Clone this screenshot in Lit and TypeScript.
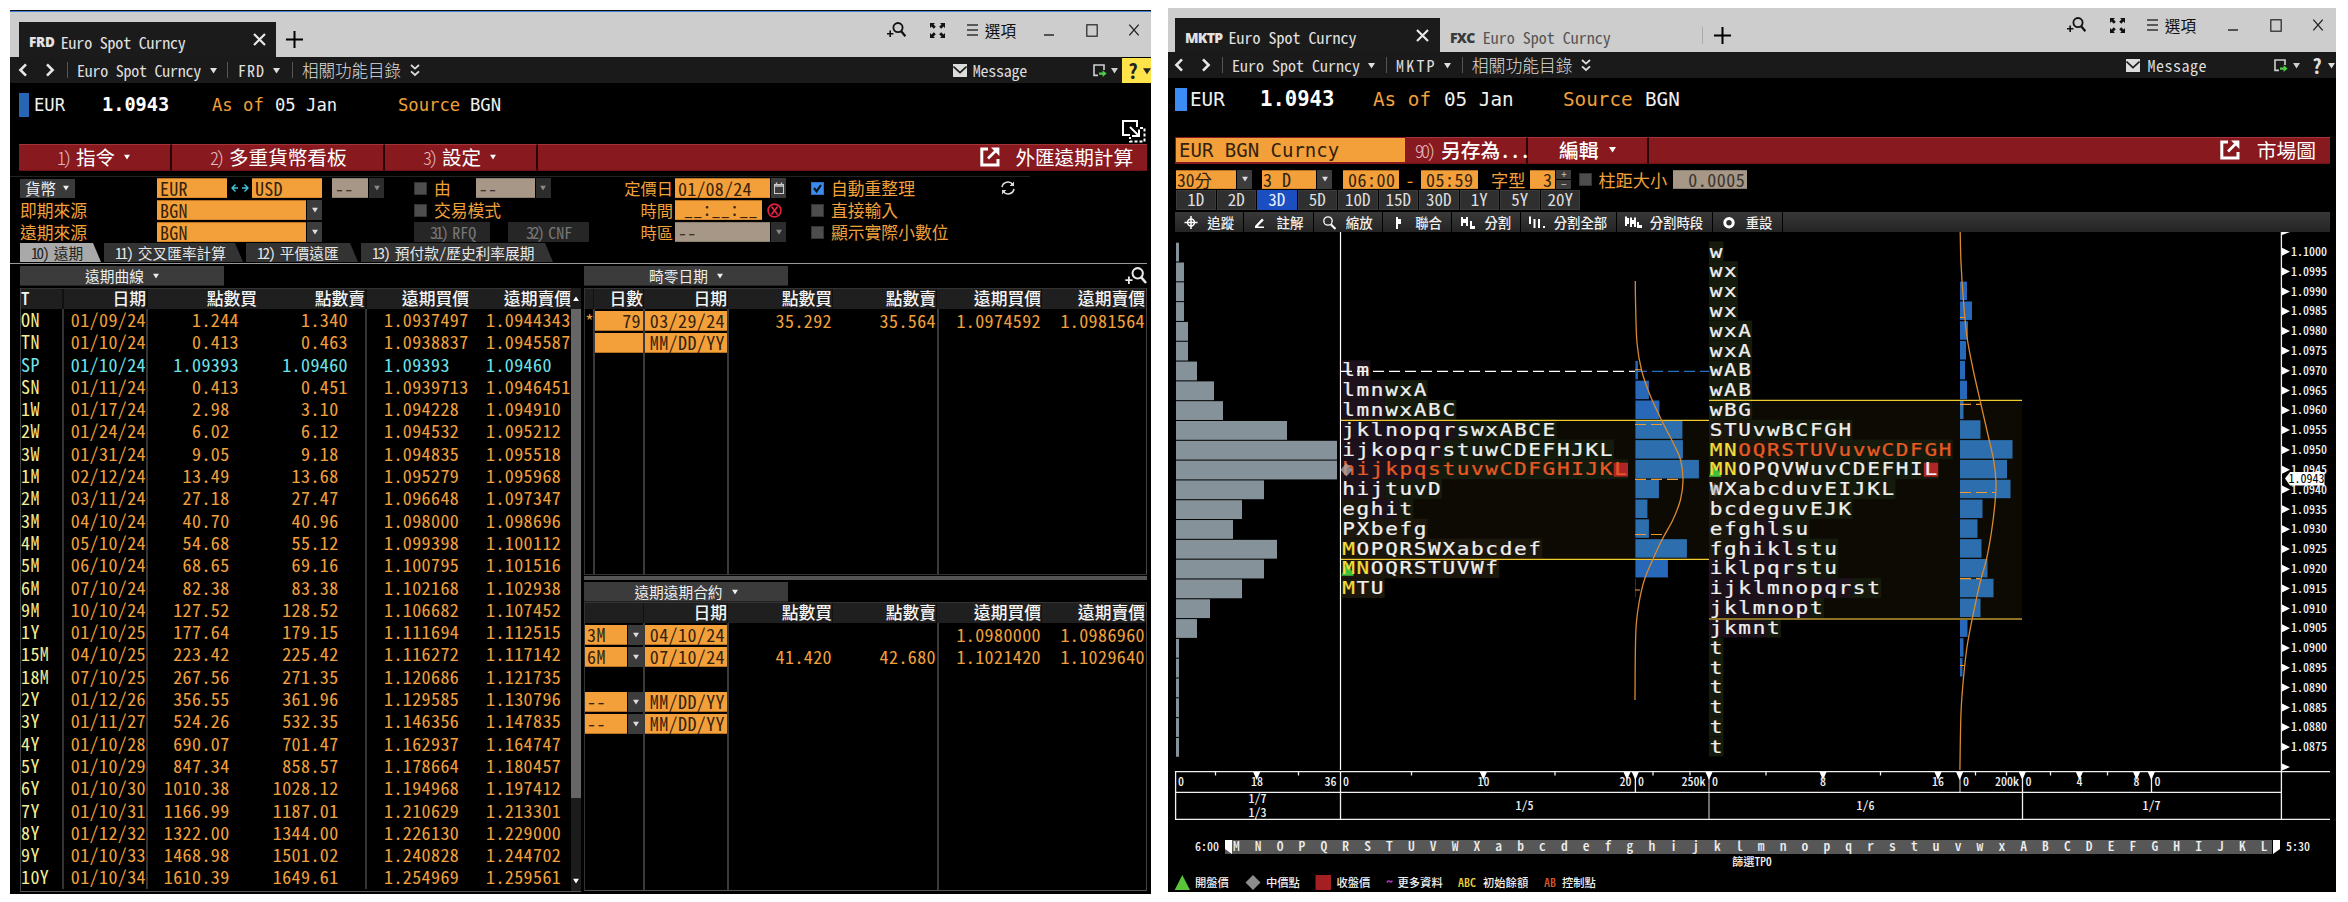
import { LitElement, html, svg, css } from "lit";
import { customElement } from "lit/decorators.js";

/* ---------- shared look ---------- */

const shared = css`
  :host {
    display: flex;
    flex-direction: column;
    box-sizing: border-box;
    background: #000;
    overflow: hidden;
    font-family: "Noto Sans CJK TC", "Liberation Sans", sans-serif;
    font-feature-settings: "hwid";
    color: #e6e6e6;
    white-space: nowrap;
  }
  * { box-sizing: border-box; }
  svg { display: block; flex: none; }
  .titlebar {
    display: flex;
    align-items: flex-end;
    background: #cdcdcd;
    flex: none;
  }
  .tab { display: flex; align-items: center; font-size: 16px; letter-spacing: -0.2px; }
  .tab.active { background: #1b1b1b; color: #e2e2e2; }
  .tab b { font-family: "Open Sans", sans-serif; font-weight: 800; font-size: 13.5px; letter-spacing: -0.2px; }
  .sysicons { display: flex; align-items: center; margin-left: auto; align-self: flex-start; color: #111; }
  .sysicons .opt { font-size: 15.6px; line-height: 20px; }
  .nav {
    display: flex; align-items: center; flex: none;
    height: 26px; background: #1a1a1a; color: #dedede; font-size: 16px; letter-spacing: -0.25px;
  }
  .nav .txt { line-height: 24px; }
  .nav .rel { font-size: 16.5px; font-weight: 300; letter-spacing: 0; line-height: 24px; }
  .nav .sep { width: 1px; height: 16px; background: #555; }
  .nav .end { display: flex; align-items: center; height: 26px; margin-left: auto; }
  .info { display: grid; flex: none; font-family: "DejaVu Sans Mono", monospace; color: #f0f0f0; }
  .info .o { color: #f0a03a; }
  .info b { color: #fff; }
  .red { display: flex; flex: none; color: #fff; }
  .red .cell {
    display: flex; align-items: center; background: #87191f;
    border-top: 1px solid #a2343a; border-bottom: 1px solid #6d1217; border-right: 2px solid #2a0507;
  }
  .red .n { font-size: 18px; letter-spacing: -3px; padding-right: 2px; color: #e0b9bb; font-weight: 300; }
  .fld { background: #f3a03b; color: #33220c; border-top: 1px solid #b87424; border-bottom: 1px solid #d98b2e; display: flex; align-items: center; }
  .fld.off { background: #a69787; color: #3a332c; border-color: #8a7e70; }
  .dd { background: #3c3c3c; display: flex; align-items: center; justify-content: center; color: #ddd; }
  .dd.off { background: #2c2c2c; color: #888; }
  .cb { width: 13px; height: 13px; background: #4d4d4d; border: 1px solid #333; flex: none; }
`;

const caret = (s = 7) => html`<svg width=${s} height=${s} viewBox="0 0 7 7"><path d="M0 1H7L3.5 6.4Z" fill="currentColor" /></svg>`;

const iconSearchPlus = (w = 19, h = 16) => html`<svg width=${w} height=${h} viewBox="0 0 19 16" fill="none" stroke="currentColor">
  <circle cx="11" cy="5.6" r="4.6" stroke-width="1.8" /><path d="M14.2 9.2L18.4 14.2" stroke-width="2.2" /><path d="M0 11.7H6.4M3.2 8.5V15" stroke-width="1.6" />
</svg>`;
const iconExpand = html`<svg width="15" height="15" viewBox="0 0 15 15" fill="currentColor">
  <path d="M0 0H5L3.5 1.5 5.8 3.8 3.8 5.8 1.5 3.5 0 5ZM15 0V5L13.5 3.5 11.2 5.8 9.2 3.8 11.5 1.5 10 0ZM0 15V10L1.5 11.5 3.8 9.2 5.8 11.2 3.5 13.5 5 15ZM15 15H10L11.5 13.5 9.2 11.2 11.2 9.2 13.5 11.5 15 10Z" />
</svg>`;
const iconMenu = html`<svg width="11" height="12" viewBox="0 0 11 12" stroke="#333" stroke-width="1.3"><path d="M0 1H11M0 6H11M0 11H11" /></svg>`;
const iconMin = html`<svg width="10" height="14" viewBox="0 0 10 14" stroke="#111" stroke-width="1.3"><path d="M0 12H10" /></svg>`;
const iconMax = html`<svg width="12" height="13" viewBox="0 0 12 13" fill="none" stroke="#222" stroke-width="1.2"><rect x="0.8" y="0.8" width="10.4" height="11.4" /></svg>`;
const iconClose = html`<svg width="10" height="12" viewBox="0 0 10 12" stroke="#222" stroke-width="1.3"><path d="M0.3 0.6L9.7 11.4M9.7 0.6L0.3 11.4" /></svg>`;
const iconTabX = html`<svg width="13" height="13" viewBox="0 0 13 13" stroke="#e8e8e8" stroke-width="2.2"><path d="M1 1L12 12M12 1L1 12" /></svg>`;
const iconPlus = html`<svg width="17" height="17" viewBox="0 0 17 17" stroke="#000" stroke-width="2"><path d="M0 8.5H17M8.5 0V17" /></svg>`;
const iconBack = html`<svg width="10" height="14" viewBox="0 0 10 14" fill="none" stroke="#e6e6e6" stroke-width="2.6"><path d="M8 1.4L2.4 7 8 12.6" /></svg>`;
const iconFwd = html`<svg width="10" height="14" viewBox="0 0 10 14" fill="none" stroke="#e6e6e6" stroke-width="2.6"><path d="M2 1.4L7.6 7 2 12.6" /></svg>`;
const iconDouble = html`<svg width="10" height="13" viewBox="0 0 10 13" fill="none" stroke="#ddd" stroke-width="1.8"><path d="M1 1L5 4.6 9 1M1 7.4L5 11 9 7.4" /></svg>`;
const iconMail = html`<svg width="14" height="13" viewBox="0 0 14 13"><rect width="14" height="13" fill="#dcdcdc" /><path d="M0.5 2.5L7 8.6 13.5 2.5" fill="none" stroke="#1a1a1a" stroke-width="1.6" /></svg>`;
const iconDoc = html`<svg width="14" height="13" viewBox="0 0 14 13" fill="none"><path d="M5 11.4H1V1H11V6" stroke="#cfcfcf" stroke-width="1.6" /><path d="M6 8.6H9.6V6.2L13.6 9.6 9.6 13V10.8H6Z" fill="#4fd046" /></svg>`;
const iconPopout = html`<svg width="20" height="20" viewBox="0 0 20 20" fill="none" stroke="#fff">
  <path d="M8 2H1.8V18H18V12" stroke-width="3" /><path d="M8 11.5L15.5 4" stroke-width="2.6" /><path d="M11 0.5H19.4V9Z" fill="#fff" stroke="none" />
</svg>`;

const sysIcons = html`<div class="sysicons">
  ${iconSearchPlus()}<span class="g24">${iconExpand}</span><span class="g22">${iconMenu}</span><span class="opt g7">選項</span>
  <span class="g30">${iconMin}</span><span class="g32">${iconMax}</span><span class="g31">${iconClose}</span>
</div>`;

const sysCss = css`
  .sysicons { font-size: 0; }
  .g24 { margin-left: 24px; } .g22 { margin-left: 22px; } .g7 { margin-left: 7px; }
  .g30 { margin-left: 28px; } .g32 { margin-left: 32px; } .g31 { margin-left: 31px; }
`;

/* ---------- forward rates window ---------- */

const CURVE: string[][] = [
  ["ON", "01/09/24", "1.244", "1.340", "1.0937497", "1.0944343"],
  ["TN", "01/10/24", "0.413", "0.463", "1.0938837", "1.0945587"],
  ["SP", "01/10/24", "1.09393", "1.09460", "1.09393", "1.09460"],
  ["SN", "01/11/24", "0.413", "0.451", "1.0939713", "1.0946451"],
  ["1W", "01/17/24", "2.98", "3.10", "1.094228", "1.094910"],
  ["2W", "01/24/24", "6.02", "6.12", "1.094532", "1.095212"],
  ["3W", "01/31/24", "9.05", "9.18", "1.094835", "1.095518"],
  ["1M", "02/12/24", "13.49", "13.68", "1.095279", "1.095968"],
  ["2M", "03/11/24", "27.18", "27.47", "1.096648", "1.097347"],
  ["3M", "04/10/24", "40.70", "40.96", "1.098000", "1.098696"],
  ["4M", "05/10/24", "54.68", "55.12", "1.099398", "1.100112"],
  ["5M", "06/10/24", "68.65", "69.16", "1.100795", "1.101516"],
  ["6M", "07/10/24", "82.38", "83.38", "1.102168", "1.102938"],
  ["9M", "10/10/24", "127.52", "128.52", "1.106682", "1.107452"],
  ["1Y", "01/10/25", "177.64", "179.15", "1.111694", "1.112515"],
  ["15M", "04/10/25", "223.42", "225.42", "1.116272", "1.117142"],
  ["18M", "07/10/25", "267.56", "271.35", "1.120686", "1.121735"],
  ["2Y", "01/12/26", "356.55", "361.96", "1.129585", "1.130796"],
  ["3Y", "01/11/27", "524.26", "532.35", "1.146356", "1.147835"],
  ["4Y", "01/10/28", "690.07", "701.47", "1.162937", "1.164747"],
  ["5Y", "01/10/29", "847.34", "858.57", "1.178664", "1.180457"],
  ["6Y", "01/10/30", "1010.38", "1028.12", "1.194968", "1.197412"],
  ["7Y", "01/10/31", "1166.99", "1187.01", "1.210629", "1.213301"],
  ["8Y", "01/12/32", "1322.00", "1344.00", "1.226130", "1.229000"],
  ["9Y", "01/10/33", "1468.98", "1501.02", "1.240828", "1.244702"],
  ["10Y", "01/10/34", "1610.39", "1649.61", "1.254969", "1.259561"],
];

/* Two-decimal quotes keep one blank so that the decimal points line up. */
const padPts = (v: string) => (v.split(".")[1].length === 2 ? v + "\u00a0" : v);

@customElement("frd-window")
export class FrdWindow extends LitElement {
  static styles = [shared, sysCss, css`
    :host { width: 1141px; height: 884px; margin-top: 10px; }
    .titlebar { height: 47px; border-top: 1px solid #111; box-shadow: inset 0 1px 0 #3d7fd6; padding-left: 9px; }
    .tab.active { width: 257px; height: 35px; padding: 5px 10px 0 10px; }
    .tab .t { margin-left: 6px; line-height: 22px; }
    .tab .x { margin-left: auto; margin-top: -5px; }
    .plus { margin: 0 0 9px 10px; }
    .sysicons { margin-top: 9px; padding-right: 12px; }
    .nav { padding-left: 8px; }
    .a1 { margin-left: 17px; } .a2 { margin-left: 12px; } .a3 { margin-left: 9px; }
    .a4 { margin-left: 9px; } .a5 { margin-left: 10px; } .a6 { margin-left: 10px; } .a7 { margin-left: 8px; }
    .nav .a6 { letter-spacing: 1px; }
    .msg { margin: 0 66px 0 6px; }
    .doc { display: flex; align-items: center; gap: 4px; margin-right: 4px; color: #ccc; }
    .help { width: 29px; height: 26px; border-top: 1px solid #000; background: #ffe34b; color: #222; display: flex; align-items: center; padding-left: 6px; gap: 5px; font-weight: 700; font-size: 20px; }
    .info {
      height: 61px; padding: 10px 0 0 9px; font-size: 17.2px; line-height: 24px;
      grid-template-columns: 15px 68px 110px 63px 123px 72px 1fr 29px;
    }
    .info b { font-size: 18.6px; }
    .bar { width: 10px; height: 24px; background: #2765b5; }
    .move { align-self: end; padding-bottom: 1px; }
    .red { height: 27px; padding: 0 4px 0 9px; }
    .red .cell { padding-left: 38px; font-size: 19.6px; gap: 7px; padding-bottom: 2px; }
    .red .c1 { width: 153px; gap: 5px; } .red .c2 { width: 213px; gap: 5px; } .red .c3 { width: 153px; gap: 5px; }
    .red .c1 .caret, .red .c3 .caret { margin-left: 4px; }
    .red .c4 { flex: 1; padding: 0 14px 2px 0; justify-content: flex-end; gap: 15px; border-right: 0; }
    .form {
      display: grid; flex: none; height: 72px; padding: 7px 0 0 10px;
      background: linear-gradient(#222, #222) 0 5px / 1020px 1px no-repeat;
      grid-template-columns: 137px 175px 82px 194px 67px 136px 190px 1fr;
      grid-auto-rows: 20px; row-gap: 2px; font-size: 16.8px; line-height: 20px; color: #f2a03c;
    }
    .form > div { display: flex; align-items: center; height: 20px; }
    .form .fld, .form .dd { height: 20px; }
    .fld { font-size: 18px; letter-spacing: 0.2px; padding-left: 3px; line-height: 18px; }
    .ccy { background: #3a3a3a; color: #f0f0f0; width: 55px; height: 19px; display: flex; align-items: center; padding-left: 5px; gap: 7px; font-size: 15.5px; }
    .w70 { width: 70px; } .w36 { width: 36px; } .w59 { width: 59px; } .w149 { width: 149px; } .w95 { width: 95px; } .w87 { width: 87px; }
    .w15 { width: 15px; margin-left: 1px; }
    .form .mask { padding: 0 0 5px 9px; }
    .swap { width: 25px; display: flex; justify-content: center; }
    .gap7 { gap: 7px; }
    .from { display: flex; margin-left: 18px; }
    .btn { background: #262626; color: #777; height: 20px; display: flex; align-items: center; font-size: 16px; gap: 6px; padding-left: 16px; margin-right: 18px; }
    .btn .n { letter-spacing: -2.6px; }
    .b1 { width: 76px; } .b2 { width: 81px; padding-left: 18px; margin: 0; }
    .rj { justify-content: flex-end; padding-right: 2px; font-size: 16.3px; }
    .cb.on { background: #3b8cf0; border-color: #2f6fc0; }
    .tabs { display: flex; flex: none; height: 21px; padding-left: 10px; align-items: flex-start; border-bottom: 1px solid #9a9a9a; margin-right: 4px; }
    .tabs div { height: 19px; background: #333; display: flex; align-items: center; padding-left: 11px; gap: 6px; font-size: 14.7px; margin-right: 3px; clip-path: polygon(0 0, calc(100% - 8px) 0, 100% 100%, 0 100%); }
    .tabs .n { font-size: 15px; letter-spacing: -1.9px; }
    .tabs .on { background: #a9a9a9; color: #222; width: 81px; }
    .t2 { width: 139px; } .t3 { width: 112px; } .t4 { width: 192px; }
    .body { display: grid; grid-template-columns: 561px 1fr; column-gap: 3px; padding: 2px 4px 0 10px; height: 630px; }
    .phead { height: 20px; width: 204px; background: #3b3b3b; border-bottom: 1px solid #222; color: #eee; display: flex; align-items: center; justify-content: center; gap: 9px; font-size: 14.7px; }
    .curve, .side { display: flex; flex-direction: column; }
    .frame { display: flex; margin-top: 2px; height: 604px; border-bottom: 1px solid #555; }
    .rows { width: 551px; border-left: 1px solid #444; display: flex; flex-direction: column; }
    .row { display: grid; flex: none; height: 22.31px; line-height: 20.5px; font-size: 18px; letter-spacing: 0.4px; color: #f2a03c; }
    .rows .row { grid-template-columns: 43px 84px 109px 110px 102px 102px; }
    .rows .row span { height: 22.31px; }
    .row.h { height: 21px; line-height: 19px; font-size: 16.8px; letter-spacing: 0; color: #f4f4f4; background: #1f1f1f; border-top: 1px solid #333; font-weight: 500; }
    .rows .row.h span { height: 20px; }
    .row span { text-align: right; }
    .row span:first-child { text-align: left; }
    .rows .tn { color: #f3ee93; }
    .rows .v { border-right: 2px solid #333; }
    .rows .p1 { padding-right: 18px; } .rows .p2 { padding-right: 17px; }
    .rows .row .o1 { text-align: left; padding-left: 17px; }
    .rows .row .o2 { text-align: left; padding-left: 17px; }
    .row.h .v { border-right: 2px solid #111; }
    .rows .h .tn { color: #f4f4f4; }
    .sp, .rows .sp .tn { color: #6fe3ea; }
    .scroll { width: 10px; display: flex; flex-direction: column; align-items: center; background: #1c1c1c; color: #fff; }
    .scroll .up { height: 21px; display: flex; align-items: center; flex: none; }
    .scroll .thumb { width: 10px; height: 489px; background: #666; flex: none; }
    .scroll .down { margin-top: 80px; }
    .ph { display: flex; justify-content: space-between; height: 20px; flex: none; }
    .mag { color: #e8e8e8; padding: 1px 0 0; }
    .grid { border-left: 1px solid #333; border-right: 1px solid #444; display: grid; grid-template-rows: 22px; grid-auto-rows: 22.3px; align-content: start; flex: none; }
    .g1 { height: 287px; margin-top: 2px; border-bottom: 1px solid #333; }
    .divider { height: 4px; background: #555; margin: 1px 0 2px; flex: none; }
    .g2 { height: 289px; border-bottom: 1px solid #555; }
    .g1 .row { grid-template-columns: 9px 50px 84px 105px 104px 105px 104px; }
    .g2 .row { grid-template-columns: 59px 84px 105px 104px 105px 104px; }
    .g2 { background: linear-gradient(#3a3a3a, #3a3a3a) 58px 0 / 2px 100% no-repeat, linear-gradient(#3a3a3a, #3a3a3a) 142px 0 / 2px 100% no-repeat, linear-gradient(#3a3a3a, #3a3a3a) 352px 0 / 2px 100% no-repeat; }
    .g1 { background: linear-gradient(#3a3a3a, #3a3a3a) 8px 0 / 2px 100% no-repeat, linear-gradient(#3a3a3a, #3a3a3a) 58px 0 / 2px 100% no-repeat, linear-gradient(#3a3a3a, #3a3a3a) 142px 0 / 2px 100% no-repeat, linear-gradient(#3a3a3a, #3a3a3a) 352px 0 / 2px 100% no-repeat; }
    .g1 .row span, .g2 .row span { padding-right: 1px; }
    .g1 .row.h span, .g2 .row.h span { padding-right: 0; border-right: 1px solid #111; }
    .row i { font-style: normal; background: #f3a03b; color: #33220c; height: 20px; line-height: 18px; margin: 1px 1px 0 1px; padding-right: 2px; text-align: right; border-bottom: 1px solid #b87424; }
    .row .pick { display: flex; margin-top: 1px; height: 20px; padding: 0; }
    .row .pick i { flex: 1; margin: 0; text-align: left; padding-left: 2px; }
    .row .pick .dd { width: 15px; margin: 0 1px; }
  `];

  private gridHead(first: string[]) {
    return html`<div class="row h">${[...first, "日期", "點數買", "點數賣", "遠期買價", "遠期賣價"].map((t) => html`<span>${t}</span>`)}</div>`;
  }

  private pickRow(term: string, date: string, vals: string[]) {
    return html`<div class="row"><div class="pick"><i>${term}</i><div class="dd">${caret(6)}</div></div><i>${date}</i>${vals.map((v) => html`<span>${v}</span>`)}</div>`;
  }

  render() {
    return html`
      <div class="titlebar">
        <div class="tab active"><b>FRD</b><span class="t">Euro Spot Curncy</span><span class="x">${iconTabX}</span></div>
        <div class="plus">${iconPlus}</div>
        ${sysIcons}
      </div>
      <div class="nav">
        ${iconBack}<span class="a1">${iconFwd}</span><span class="sep a2"></span><span class="txt a3">Euro Spot Curncy</span>
        <span class="a4">${caret()}</span><span class="sep a5"></span><span class="txt a6">FRD</span><span class="a7">${caret()}</span>
        <span class="sep a2"></span><span class="rel a3">相關功能目錄</span><span class="a4">${iconDouble}</span>
        <div class="end">${iconMail}<span class="txt msg">Message</span><span class="doc">${iconDoc}${caret()}</span>
          <span class="help">?${caret(8)}</span></div>
      </div>
      <div class="info">
        <span class="bar"></span><span>EUR</span><b>1.0943</b><span class="o">As of</span><span>05 Jan</span><span class="o">Source</span><span>BGN</span>
        <span class="move"><svg width="24" height="23" viewBox="0 0 24 23" fill="none" stroke="#fff">
          <path d="M8 15H1V1H15V7" stroke-width="2" /><path d="M8 7L16.5 15.5M17 9.5V16H10" stroke-width="2" />
          <path d="M18 8H22.5V21.5H8V17" stroke-width="2" stroke-dasharray="3 2" />
        </svg></span>
      </div>
      <div class="red">
        <div class="cell c1"><span class="n">1)</span>指令<span class="caret">${caret(6)}</span></div>
        <div class="cell c2"><span class="n">2)</span>多重貨幣看板</div>
        <div class="cell c3"><span class="n">3)</span>設定<span class="caret">${caret(6)}</span></div>
        <div class="cell c4">${iconPopout}外匯遠期計算</div>
      </div>
      <div class="form">
        <div><span class="ccy">貨幣${caret(6)}</span></div>
        <div><span class="fld w70">EUR</span><span class="swap"><svg width="18" height="8" viewBox="0 0 18 8" stroke="#45c3dd" fill="none" stroke-width="1.4"><path d="M4.5 0.5L1 4 4.5 7.5M1 4H7M13.5 0.5L17 4 13.5 7.5M17 4H11" /></svg></span><span class="fld w70">USD</span></div>
        <div><span class="fld off w36">--</span><span class="dd off w15">${caret(6)}</span></div>
        <div class="gap7"><span class="cb"></span>由<span class="from"><span class="fld off w59">--</span><span class="dd off w15">${caret(6)}</span></span></div>
        <div class="rj">定價日</div>
        <div><span class="fld w95">01/08/24</span><span class="dd w15"><svg width="10" height="12" viewBox="0 0 10 12" fill="none" stroke="#ccc"><rect x="0.5" y="2.5" width="9" height="9" /><path d="M0.5 4H9.5M2.5 0.5V3M7.5 0.5V3" stroke-width="1.4" /></svg></span></div>
        <div class="gap7"><span class="cb on"><svg width="11" height="11" viewBox="0 0 11 11" fill="none" stroke="#10151c" stroke-width="2.2"><path d="M2 5L4.6 8.4 9 2" /></svg></span>自動重整理</div>
        <div><svg width="14" height="14" viewBox="0 0 14 14" fill="none" stroke="#ddd" stroke-width="1.6"><path d="M1 6A6 6 0 0 1 11.8 3.6M13 8A6 6 0 0 1 2.2 10.4" /><path d="M13 0.5V5H8.6ZM1 13.5V9H5.4Z" fill="#ddd" stroke="none" /></svg></div>

        <div>即期來源</div>
        <div><span class="fld w149">BGN</span><span class="dd w15">${caret(6)}</span></div>
        <div></div>
        <div class="gap7"><span class="cb"></span>交易模式</div>
        <div class="rj">時間</div>
        <div><span class="fld w87 mask">__:__:__</span><svg width="24" height="15" viewBox="-5 0 24 15" fill="none" stroke="#e0213e" stroke-width="1.7"><circle cx="7.5" cy="7.5" r="6.4" /><path d="M4.4 3.6L10.6 11.4M10.6 3.6L4.4 11.4" /></svg></div>
        <div class="gap7"><span class="cb"></span>直接輸入</div>
        <div></div>

        <div>遠期來源</div>
        <div><span class="fld w149">BGN</span><span class="dd w15">${caret(6)}</span></div>
        <div></div>
        <div><span class="btn b1"><span class="n">31)</span>RFQ</span><span class="btn b2"><span class="n">32)</span>CNF</span></div>
        <div class="rj">時區</div>
        <div><span class="fld off w95">--</span><span class="dd off w15">${caret(6)}</span></div>
        <div class="gap7"><span class="cb"></span>顯示實際小數位</div>
        <div></div>
      </div>
      <div class="tabs">
        <div class="on"><span class="n">10)</span>遠期</div><div class="t2"><span class="n">11)</span>交叉匯率計算</div>
        <div class="t3"><span class="n">12)</span>平價遠匯</div><div class="t4"><span class="n">13)</span>預付款/歷史利率展期</div>
      </div>
      <div class="body">
        <div class="curve">
          <div class="phead">遠期曲線${caret(6)}</div>
          <div class="frame">
            <div class="rows">
              <div class="row h"><span class="tn v">T</span><span class="v">日期</span><span>點數買</span><span class="v">點數賣</span><span>遠期買價</span><span>遠期賣價</span></div>
              ${CURVE.map((r) => html`<div class="row ${r[0] === "SP" ? "sp" : ""}">
                <span class="tn v">${r[0]}</span><span class="v">${r[1]}</span><span class="p1">${padPts(r[2])}</span><span class="p2 v">${padPts(r[3])}</span><span class="o1">${r[4]}</span><span class="o2">${r[5]}</span></div>`)}
            </div>
            <div class="scroll">
              <span class="up"><svg width="6" height="6" viewBox="0 0 6 6"><path d="M0 5L3 0.5 6 5Z" fill="#fff" /></svg></span>
              <span class="thumb"></span><span class="down">${caret(6)}</span>
            </div>
          </div>
        </div>
        <div class="side">
          <div class="ph"><div class="phead">畸零日期${caret(6)}</div><span class="mag">${iconSearchPlus(22, 18)}</span></div>
          <div class="grid g1">
            ${this.gridHead(["", "日數"])}
            <div class="row"><span>*</span><i>79</i><i>03/29/24</i><span>35.292</span><span>35.564</span><span>1.0974592</span><span>1.0981564</span></div>
            <div class="row"><span></span><i></i><i>MM/DD/YY</i></div>
          </div>
          <div class="divider"></div>
          <div class="phead">遠期遠期合約${caret(6)}</div>
          <div class="grid g2">
            ${this.gridHead([""])}
            ${this.pickRow("3M", "04/10/24", ["", "", "1.0980000", "1.0986960"])}
            ${this.pickRow("6M", "07/10/24", ["41.420", "42.680", "1.1021420", "1.1029640"])}
            <div class="row"></div>
            ${this.pickRow("--", "MM/DD/YY", [])}
            ${this.pickRow("--", "MM/DD/YY", [])}
          </div>
        </div>
      </div>
    `;
  }
}

/* ---------- market profile window ---------- */

const ROW0 = 251.3;
const PITCH = 19.81;
const CELL = 14.33;
const rowY = (i: number) => ROW0 + PITCH * i;

const TOTAL = [3, 8, 8, 8, 12, 12, 21, 38, 47, 111, 161, 161, 88, 66, 57, 101, 88, 66, 34, 21, 3, 3, 3, 3, 3, 3];

interface Profile {
  x: number; first: number; rows: string[]; poc: number; open: number; close: number;
  vx: number; volFirst: number; vol: number[]; va: [number, number, number];
}

const DAY5: Profile = {
  x: 1341.4, first: 6, poc: 11, open: 16, close: 11, vx: 1635.4, volFirst: 6,
  rows: ["lm", "lmnwxA", "lmnwxABC", "jklnopqrswxABCE", "ijkopqrstuwCDEFHJKL", "hijkpqstuvwCDFGHIJKL", "hijtuvD", "eghit", "PXbefg", "MOPQRSWXabcdef", "MNOQRSTUVWf", "MTU"],
  vol: [2.5, 13.5, 24, 47, 47.5, 63.5, 23.5, 12, 13.5, 51.5, 32.5, 0.5], va: [420.3, 559.4, 1709],
};
const DAY6: Profile = {
  x: 1708.9, first: 0, poc: 10, open: 11, close: 11, vx: 1960, volFirst: 2,
  rows: ["w", "wx", "wx", "wx", "wxA", "wxA", "wAB", "wAB", "wBG", "STUvwBCFGH", "MNOQRSTUVuvwCDFGH", "MNOPQVWuvCDEFHIL", "WXabcduvEIJKL", "bcdeguvEJK", "efghlsu", "fghiklstu", "iklpqrstu", "ijklmnopqrst", "jklmnopt", "jkmnt", "t", "t", "t", "t", "t", "t"],
  vol: [7, 12, 8, 6, 5, 7, 3.5, 20.5, 52.5, 47, 50.5, 22.5, 17.5, 21.5, 27.5, 33.5, 20.5, 7.5, 3.5, 2.5], va: [400.4, 619, 2022],
};

const SESSION = "MNOPQRSTUVWXabcdefghijklmnopqrstuvwxABCDEFGHIJKL";

const tint = (c: string) => {
  const k = SESSION.indexOf(c);
  if (k >= 19 && k < 30) return "#1d121b";
  if (k >= 30) return "#151b0c";
  return "#1c170d";
};

const curve = (pts: number[][]) => {
  let d = `M${pts[0][0]} ${pts[0][1]}`;
  for (let i = 0; i < pts.length - 1; i++) {
    const p0 = pts[Math.max(0, i - 1)], p1 = pts[i], p2 = pts[i + 1], p3 = pts[Math.min(pts.length - 1, i + 2)];
    d += `C${p1[0] + (p2[0] - p0[0]) / 6} ${p1[1] + (p2[1] - p0[1]) / 6} ${p2[0] - (p3[0] - p1[0]) / 6} ${p2[1] - (p3[1] - p1[1]) / 6} ${p2[0]} ${p2[1]}`;
  }
  return d;
};
const CURVE5 = curve([[1635.3, 281], [1635.6, 305], [1637, 343], [1641.5, 370], [1650, 395], [1661.5, 420], [1674.2, 445], [1680.6, 460], [1683, 480], [1680.4, 500], [1672.8, 520], [1662.4, 539], [1651.7, 562], [1644, 581], [1639, 603], [1636.2, 625], [1635.3, 655], [1635, 700]]);
const CURVE6 = curve([[1960.2, 232], [1961, 263], [1963.6, 303], [1967, 337], [1973.2, 370], [1980.4, 402], [1988, 435], [1993.8, 461], [1996, 483], [1994.8, 505], [1991.3, 533], [1986.3, 560], [1980.2, 582], [1972.4, 618], [1967, 647], [1963.6, 677], [1961, 713], [1959.9, 770]]);

@customElement("mktp-window")
export class MktpWindow extends LitElement {
  static styles = [shared, sysCss, css`
    :host { width: 1168px; height: 884px; margin-top: 8px; }
    .titlebar { height: 44px; padding-left: 7px; }
    .tab { height: 34px; padding: 4px 11px 0 10px; font-size: 16px; letter-spacing: 0; }
    .tab.active { width: 265px; }
    .tab.idle { width: 254px; color: #555; }
    .tab.idle b { color: #3a3a3a; }
    .tab b { font-size: 14px; letter-spacing: -0.7px; }
    .tab .t { margin-left: 6px; line-height: 22px; }
    .tab.idle .t { margin-left: 8px; }
    .tab .x { margin-left: auto; margin-top: -3px; }
    .tsep { width: 1px; height: 17px; background: #aaa; margin: 0 0 8px 8px; }
    .plus { margin: 0 0 8px 11px; }
    .sysicons { margin-top: 7px; padding-right: 13px; }
    .sysicons .g30 { margin-left: 32px; }
    .nav { padding-left: 6px; letter-spacing: 0; }
    .a1 { margin-left: 17px; } .a2 { margin-left: 11px; } .a3 { margin-left: 9px; }
    .a4 { margin-left: 8px; } .a5 { margin-left: 11px; } .a6 { margin-left: 9px; } .a7 { margin-left: 7px; }
    .nav .a6 { letter-spacing: 2.2px; }
    .nav .rel { font-size: 16.8px; }
    .msg { margin: 0 67px 0 7px; letter-spacing: 0.5px; }
    .doc { display: flex; align-items: center; gap: 5px; margin-right: 12px; color: #ccc; }
    .help { display: flex; align-items: center; gap: 6px; font-weight: 700; font-size: 20px; width: 24px; }
    .info {
      height: 59px; padding: 10px 0 0 7px; font-size: 19.3px; line-height: 23px;
      grid-template-columns: 15px 70px 113px 71px 119px 82px 1fr;
    }
    .info b { font-size: 20.6px; }
    .bar { width: 12px; height: 23px; background: #3b8df5; }
    .red { height: 27px; padding: 0 6px 0 7px; font-size: 19.8px; }
    .red .cell { padding-bottom: 2px; }
    .sec { width: 231px; border: 1px solid #87191f; border-width: 1px 1px 2px 1px; background: #f3a03b; color: #33220c; font-family: "DejaVu Sans Mono", monospace; font-size: 19px; display: flex; align-items: center; padding-left: 3px; }
    .red .c1 { width: 122px; padding-left: 9px; gap: 6px; font-weight: 500; } .red .c2 { width: 121px; padding-left: 31px; gap: 10px; font-weight: 500; }
    .red .c3 { flex: 1; justify-content: flex-end; gap: 17px; padding-right: 14px; border-right: 0; }
    .ctl { display: flex; align-items: center; height: 26px; padding: 4px 0 0 8px; font-size: 17.2px; color: #f2a03c; flex: none; line-height: 19px; }
    .ctl .fld, .ctl .dd { height: 19px; line-height: 17px; }
    .fld { font-size: 18px; letter-spacing: 0.5px; padding-left: 1px; }
    .f1 { width: 60px; letter-spacing: 0; font-size: 17.5px; } .f2 { width: 54px; margin-left: 10px; } .f3 { width: 56px; margin-left: 11px; padding-left: 5px; } .f4 { width: 57px; padding-left: 5px; }
    .w15 { width: 15px; margin-left: 1px; }
    .dash { width: 22px; text-align: center; }
    .font { margin: 0 5px 0 13px; }
    .f5 { width: 25px; justify-content: flex-end; padding-right: 3px; }
    .pm { width: 15px; height: 19px; margin: 0 8px 0 1px; display: flex; flex-direction: column; gap: 1px; }
    .pm span { background: #3c3c3c; height: 9px; font-size: 10px; line-height: 8px; text-align: center; color: #ccc; }
    .bs { margin: 0 6px; }
    .f6 { width: 74px; justify-content: flex-end; padding-right: 2px; }
    .spans { display: flex; height: 20px; padding-left: 8px; gap: 1px; flex: none; }
    .spans span { width: 39.5px; background: #2f2f2f; color: #ddd; border: 1px solid #3b3b3b; font-size: 17px; line-height: 16px; text-align: center; }
    .spans .on { background: #1b4fc1; border-color: #1b4fc1; color: #e8eeff; }
    .tools { display: flex; height: 20px; margin: 2px 6px 0 7px; background: linear-gradient(#383838, #242424); font-size: 13.4px; color: #f0f0f0; flex: none; font-weight: 500; }
    .tools div { display: grid; grid-template-columns: 32px auto; align-items: center; justify-items: center; width: 69.3px; padding-right: 9px; border-right: 1px solid #000; line-height: 19px; }
    .tools .wide { width: 96px; }
    .chart { font-size: 12px; font-weight: 500; flex: none; }
    .tpo { font-family: "DejaVu Sans Mono", monospace; font-size: 17.5px; font-weight: 400; letter-spacing: 1.4px; fill: #f0f0f0; stroke: #f0f0f0; stroke-width: 0.25; }
    .ib { fill: #f2dc3a; stroke: #f2dc3a; }
    .poc { fill: #e85a24; stroke: #e85a24; }
    .thin { font-weight: 400; }
    .axis { stroke: #f0f0f0; stroke-width: 1.3; fill: none; }
    .sess { font-size: 13.5px; font-weight: 500; fill: #eee; text-anchor: middle; }
    .lg { font-size: 11.3px; fill: #f0f0f0; }
    .m { text-anchor: middle; } .e { text-anchor: end; }
  `];

  private profile(p: Profile) {
    const scale = 1.2;
    return svg`
      <rect x=${p.x} y=${p.va[0]} width=${p.va[2] - p.x} height=${p.va[1] - p.va[0]} fill="#0d0a03" />
      ${p.rows.map((row, i) => {
        const y = rowY(p.first + i);
        return [...row].map((c, k) => svg`<rect x=${p.x + k * CELL} y=${y - 9.9} width=${CELL + 0.3} height=${PITCH} fill=${tint(c)} />`);
      })}
      ${p.vol.map((w, i) => {
        const y = rowY(p.volFirst + i);
        const inside = y > p.va[0] && y < p.va[1];
        return svg`<rect x=${p.vx} y=${y - 9.3} width=${w} height="18.5" fill=${inside ? "#2d6fae" : "#2868b9"} />`;
      })}
      <path d=${`M${p.x} ${rowY(p.open) + 7.5}L${p.x + 6} ${rowY(p.open) - 6} ${p.x + 12.5} ${rowY(p.open) + 7.5}Z`} fill="#3fc23a" />
      ${p.rows.map((row, i) => {
        const idx = p.first + i;
        const y = rowY(idx);
        const ib = row.match(/^MN?/)?.[0].length ?? 0;
        const n = row.length;
        return svg`
          ${idx === p.close ? svg`<rect x=${p.x + (n - 1) * CELL} y=${y - 6.5} width=${CELL} height="14" fill="#b02525" />` : ""}
          <text class="tpo" transform=${`translate(${p.x + 0.8} ${y + 6.2}) scale(${scale} 1)`}><tspan class="ib">${row.slice(0, ib)}</tspan><tspan class=${idx === p.poc ? "poc" : ""}>${row.slice(ib)}</tspan></text>`;
      })}`;
  }

  private chart() {
    const tri = (x: number, y = 772) => svg`<path d=${`M${x - 3.5} ${y}H${x + 3.5}L${x} ${y + 8}Z`} fill="#fff" />`;
    const lab = (x: number, t: string, cls = "") => svg`<text x=${x} y="786" class=${cls} fill="#eee">${t}</text>`;
    return html`<svg class="chart" width="1168" height="660" viewBox="1168 232 1168 660">
      ${TOTAL.map((w, i) => svg`<rect x="1176" y=${rowY(i) - 8.6} width=${w} height="18.8" fill="#85929a" />`)}
      <path d="M1340.5 232V770" stroke="#fff" stroke-width="1.2" />
      ${this.profile(DAY5)}
      ${this.profile(DAY6)}
      <path d="M1340.5 469.7L1346.5 463 1352.5 469.7 1346.5 476.5Z" fill="#aaa" fill-opacity="0.75" />
      <path d="M1709.5 489.5L1715 483 1720.5 489.5 1715 496Z" fill="#aaa" fill-opacity="0.45" />
      <path d="M1341 371.4H1635" stroke="#fff" stroke-width="1.2" stroke-dasharray="11 5" />
      <path d="M1636 371.4H1709" stroke="#2a6fc4" stroke-width="1.2" stroke-dasharray="11 5" />
      <path d="M1341 420.4H1709M1341 559.4H1709M1709 400.4H2022" stroke="#f0cc30" stroke-width="1.2" />
      <path d="M1709 619H2022" stroke="#8d7424" stroke-width="2" />
      <path d="M1635 369.7H1641M1635 590H1640M1960 317.5H1964M1960 665.5H1964" stroke="#f59b2d" stroke-width="1.1" />
      <path d="M1635 424.5H1662M1635 479.3H1683M1635 534.5H1662M1960 404.3H1981M1960 492.5H1996M1960 578.7H1980" stroke="#f59b2d" stroke-width="1.2" stroke-dasharray="11 5" />
      <path d=${CURVE5} fill="none" stroke="#d9892f" stroke-width="1.3" />
      <path d=${CURVE6} fill="none" stroke="#d9892f" stroke-width="1.3" />

      <path class="axis" d="M2281.4 232V819" />
      <path d="M2282 232H2290L2282 235Z M2282 763.5L2290 767 2282 770.5Z" fill="#fff" />
      ${TOTAL.map((_, i) => svg`<path d=${`M2282 ${rowY(i) - 3.5}L2290 ${rowY(i) + 0.5} 2282 ${rowY(i) + 4.5}Z`} fill="#fff" />
        <text x="2291" y=${rowY(i) + 4.7} fill="#f0f0f0">${(1.1 - 0.0005 * i).toFixed(4)}</text>`)}
      <path d="M2285 478.5L2290 472H2324.5V485.5H2290Z" fill="#fff" />
      <text class="thin" x="2288.5" y="483.2" fill="#000">1.0943</text>

      <path class="axis" d="M1175 771.7H2330M1175 792.4H2281M1175 819.4H2330M1175.6 771V819M1340.5 771V819M1635.4 771V792M2022.5 771V819M2151.5 771V792" />
      <path class="axis" d="M1709 771V819M1960 771V792" stroke-opacity="0.7" />
      <path class="axis" d="M1215.5 772V775.5M1298.5 772V775.5M1411.5 772V775.5M1555 772V775.5M1653 772V775.5M1690 772V775.5M1766 772V775.5M1880.5 772V775.5M1975.5 772V775.5M2006.5 772V775.5M2050.5 772V775.5M2107.5 772V775.5" stroke-width="1" />
      ${[1256.7, 1483.4, 1627, 1635.3, 1709, 1823, 1938, 1959.6, 2022.3, 2079.4, 2136.6, 2151.3].map((x) => tri(x))}
      ${lab(1178, "0")}${lab(1257, "18", "m")}${lab(1336.5, "36", "e")}${lab(1343, "0")}${lab(1483.4, "10", "m")}
      ${lab(1625.5, "20", "m")}${lab(1638, "0")}${lab(1705.5, "250k", "e")}${lab(1712, "0")}${lab(1823, "8", "m")}${lab(1938, "16", "m")}
      ${lab(1963, "0")}${lab(2019, "200k", "e")}${lab(2025.5, "0")}${lab(2079.4, "4", "m")}${lab(2136.6, "8", "m")}${lab(2154.5, "0")}
      <g fill="#eee"><text class="m" x="1257.5" y="803">1/7</text><text class="m" x="1257.5" y="816.5">1/3</text>
        <text class="m" x="1524.5" y="810.3">1/5</text><text class="m" x="1865.5" y="810.3">1/6</text><text class="m" x="2151.5" y="810.3">1/7</text></g>

      <rect x="1225" y="840" width="1047" height="14" fill="#575757" />
      <path d="M1225 840H1232V854L1225 849Z" fill="#fff" /><path d="M2273 840H2280V849L2273 854Z" fill="#fff" />
      ${[...SESSION].map((c, i) => svg`<text class="sess" x=${1236.3 + i * 21.87} y="851">${c}</text>`)}
      <text x="1195" y="850.8" fill="#eee">6:00</text><text x="2286" y="850.8" fill="#eee">5:30</text>
      <text class="lg" x="1732" y="866">篩選TPO</text>

      <path d="M1182.3 875L1190 890H1174.7Z" fill="#5ac43b" />
      <path d="M1253 875L1260.5 882.5 1253 890 1245.5 882.5Z" fill="#8d8d8d" />
      <rect x="1315.5" y="875" width="15.5" height="15" fill="#a41f22" />
      <text class="lg" x="1195" y="887">開盤價</text><text class="lg" x="1266" y="887">中價點</text><text class="lg" x="1336.5" y="887">收盤價</text>
      <path d="M1387 882.5q1.3-2.4 2.7-1t2.6-.8" fill="none" stroke="#c02fd0" stroke-width="1.6" />
      <text class="lg" x="1397.5" y="887">更多資料</text><text x="1458" y="887" fill="#e8d63a">ABC</text><text class="lg" x="1483" y="887">初始餘額</text>
      <text x="1544" y="887" fill="#d8562a">AB</text><text class="lg" x="1562" y="887">控制點</text>
    </svg>`;
  }

  private tool(icon: unknown, label: string, wide = false) {
    return html`<div class=${wide ? "wide" : ""}>
      <svg width="18" height="15" viewBox="0 0 18 15" fill="#fff" stroke="none">${icon}</svg>${label}</div>`;
  }

  render() {
    return html`
      <div class="titlebar">
        <div class="tab active"><b>MKTP</b><span class="t">Euro Spot Curncy</span><span class="x">${iconTabX}</span></div>
        <div class="tab idle"><b>FXC</b><span class="t">Euro Spot Curncy</span></div>
        <span class="tsep"></span><div class="plus">${iconPlus}</div>
        ${sysIcons}
      </div>
      <div class="nav">
        ${iconBack}<span class="a1">${iconFwd}</span><span class="sep a2"></span><span class="txt a3">Euro Spot Curncy</span>
        <span class="a4">${caret()}</span><span class="sep a5"></span><span class="txt a6">MKTP</span><span class="a7">${caret()}</span>
        <span class="sep a2"></span><span class="rel a3">相關功能目錄</span><span class="a4">${iconDouble}</span>
        <div class="end">${iconMail}<span class="txt msg">Message</span><span class="doc">${iconDoc}${caret()}</span>
          <span class="help">?${caret(7)}</span></div>
      </div>
      <div class="info">
        <span class="bar"></span><span>EUR</span><b>1.0943</b><span class="o">As of</span><span>05 Jan</span><span class="o">Source</span><span>BGN</span>
      </div>
      <div class="red">
        <div class="sec">EUR BGN Curncy</div>
        <div class="cell c1"><span class="n">90)</span>另存為...</div>
        <div class="cell c2">編輯${caret(7)}</div>
        <div class="cell c3">${iconPopout}市場圖</div>
      </div>
      <div class="ctl">
        <span class="fld f1">30分</span><span class="dd w15">${caret(6)}</span>
        <span class="fld f2">3 D</span><span class="dd w15">${caret(6)}</span>
        <span class="fld f3">06:00</span><span class="dash">-</span><span class="fld f4">05:59</span>
        <span class="font">字型</span><span class="fld f5">3</span>
        <span class="pm"><span>+</span><span>−</span></span>
        <span class="cb"></span><span class="bs">柱距大小</span><span class="fld off f6">0.0005</span>
      </div>
      <div class="spans">${["1D", "2D", "3D", "5D", "10D", "15D", "30D", "1Y", "5Y", "20Y"].map((t) => html`<span class=${t === "3D" ? "on" : ""}>${t}</span>`)}</div>
      <div class="tools">
        ${this.tool(svg`<g fill="none" stroke="#fff" stroke-width="1.5"><circle cx="9" cy="7.5" r="3.4" /><path d="M9 1V14M2.5 7.5H15.5" /></g>`, "追蹤")}
        ${this.tool(svg`<path d="M4 11L11 3.5 12.8 5.2 6.5 11.6H13V13H4Z" />`, "註解")}
        ${this.tool(svg`<g fill="none" stroke="#fff"><circle cx="7" cy="6" r="4.2" stroke-width="1.3" /><path d="M10 9.5L14.5 14" stroke-width="2.2" /></g>`, "縮放")}
        ${this.tool(svg`<path d="M6 2H8V4H11V9H8V14H6Z" />`, "聯合")}
        ${this.tool(svg`<path d="M2 2H4V4H7V2H9V11H7V8H4V11H2ZM11 6H13V11H16V14H11Z" />`, "分割")}
        ${this.tool(svg`<path d="M1 1.5H3V9H1ZM5.5 4H7.5V13H5.5ZM10 4H12V13H10ZM15 11H17V13H15Z" />`, "分割全部", true)}
        ${this.tool(svg`<path d="M1 1.5H3V3H5V9H3V11H1ZM6 2.5H8V5H10V2.5H12V12H10V9H8V12H6ZM13 7H15V10H18V13H13Z" />`, "分割時段", true)}
        ${this.tool(svg`<circle cx="9" cy="7.7" r="4.2" fill="none" stroke="#fff" stroke-width="3" />`, "重設")}
      </div>
      ${this.chart()}
    `;
  }
}

@customElement("app-root")
export class AppRoot extends LitElement {
  static styles = css`
    :host { display: flex; align-items: flex-start; gap: 17px; width: 2348px; height: 902px; padding-left: 10px; box-sizing: border-box; background: #fff; overflow: hidden; }
    frd-window, mktp-window { flex: none; }
  `;
  render() {
    return html`<frd-window></frd-window><mktp-window></mktp-window>`;
  }
}
